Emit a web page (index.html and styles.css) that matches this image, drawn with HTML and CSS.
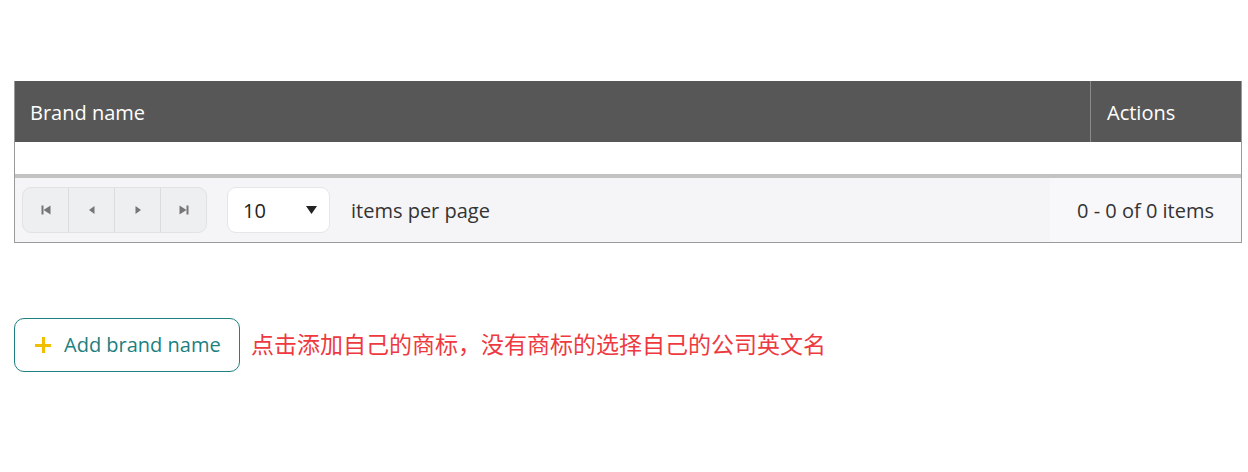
FILE: index.html
```html
<!DOCTYPE html>
<html>
<head>
<meta charset="utf-8">
<link rel="stylesheet" href="styles.css">
</head>
<body>
<div class="page">
  <div class="grid">
    <div class="grid-header">
      <div class="th th-name">Brand name</div>
      <div class="th th-actions">Actions</div>
    </div>
    <div class="grid-body"></div>
    <div class="grid-sep"></div>
    <div class="pager">
      <div class="pager-nav">
        <span class="pbtn"><svg width="12" height="12" viewBox="0 0 12 12"><rect x="1.5" y="1.5" width="2" height="9" fill="#767676"/><path d="M10.5 1.5 L3.5 6 L10.5 10.5 Z" fill="#767676"/></svg></span>
        <span class="pbtn"><svg width="12" height="12" viewBox="0 0 12 12"><path d="M8.5 2 L3 6 L8.5 10 Z" fill="#767676"/></svg></span>
        <span class="pbtn"><svg width="12" height="12" viewBox="0 0 12 12"><path d="M3.5 2 L9 6 L3.5 10 Z" fill="#767676"/></svg></span>
        <span class="pbtn"><svg width="12" height="12" viewBox="0 0 12 12"><path d="M1.5 1.5 L8.5 6 L1.5 10.5 Z" fill="#767676"/><rect x="8.5" y="1.5" width="2" height="9" fill="#767676"/></svg></span>
      </div>
      <div class="pager-size">
        <span class="size-val">10</span>
        <svg class="caret" width="11" height="8" viewBox="0 0 11 8"><path d="M0 0 L11 0 L5.5 8 Z" fill="#222"/></svg>
      </div>
      <span class="pager-label">items per page</span>
      <span class="pager-info">0 - 0 of 0 items</span>
    </div>
  </div>
  <div class="add-row">
    <button class="add-btn"><span class="plus"></span><span class="add-text">Add brand name</span></button>
    <span class="hint">点击添加自己的商标，没有商标的选择自己的公司英文名</span>
  </div>
</div>
</body>
</html>
```

FILE: styles.css
```css
html, body {
  margin: 0;
  padding: 0;
  background: #fff;
}
body {
  font-family: "Open Sans", "Noto Sans", sans-serif;
  color: #333;
}
.page {
  padding: 81px 6px 0 14px;
}
.grid {
  width: 1226px;
  border: 1px solid #9a9a9a;
  border-top: none;
  box-sizing: content-box;
}
.grid-header {
  display: flex;
  height: 61px;
  background: #575757;
  color: #fff;
  font-size: 20px;
}
.th {
  display: flex;
  align-items: center;
  padding-left: 15px;
  padding-top: 1px;
}
.th-name {
  flex: 1;
}
.th-actions {
  width: 134px;
  border-left: 1px solid #8a8a8a;
  padding-left: 16px;
}
.grid-body {
  height: 32px;
  background: #fff;
}
.grid-sep {
  height: 4px;
  background: #c3c3c3;
}
.pager {
  display: flex;
  align-items: center;
  height: 64px;
  padding: 0 0 0 7px;
  background: linear-gradient(to right, #f5f5f7 0, #f5f5f7 1035px, #f8f8fa 1035px);
  font-size: 20px;
}
.pager-nav {
  display: flex;
  height: 44px;
  border: 1px solid #e2e2e4;
  border-radius: 9px;
  background: #eeeff1;
  overflow: hidden;
}
.pbtn {
  width: 45px;
  display: flex;
  align-items: center;
  justify-content: center;
  border-left: 1px solid #dcdcde;
}
.pbtn:first-child {
  border-left: none;
}
.pager-size {
  margin-left: 20px;
  width: 101px;
  height: 44px;
  box-sizing: content-box;
  border: 1px solid #e6e6e8;
  border-radius: 9px;
  background: #fff;
  display: flex;
  align-items: center;
  padding: 0;
}
.size-val {
  margin-left: 15px;
  color: #222;
  flex: 1;
}
.caret {
  margin-right: 12px;
}
.pager-label {
  margin-left: 21px;
  color: #333;
}
.pager-info {
  margin-left: auto;
  margin-right: 27px;
  color: #333;
}
.add-row {
  display: flex;
  align-items: center;
  margin-top: 75px;
}
.add-btn {
  display: flex;
  align-items: center;
  width: 226px;
  height: 54px;
  padding: 0 0 0 20px;
  border: 1px solid #1e8080;
  border-radius: 10px;
  background: #fff;
  font-family: "Open Sans", sans-serif;
  font-size: 20px;
  color: #1c7f80;
  cursor: pointer;
}
.add-text {
  margin-top: -2px;
}
.plus {
  position: relative;
  width: 16px;
  height: 16px;
  margin-right: 13px;
}
.plus::before,
.plus::after {
  content: "";
  position: absolute;
  background: #f0c000;
}
.plus::before {
  left: 0;
  top: 6.5px;
  width: 16px;
  height: 3px;
}
.plus::after {
  left: 6.5px;
  top: 0;
  width: 3px;
  height: 16px;
}
.hint {
  margin-left: 11px;
  font-family: "Noto Sans CJK SC", sans-serif;
  font-size: 23px;
  color: #ee3a3f;
  margin-top: -4px;
}
```
